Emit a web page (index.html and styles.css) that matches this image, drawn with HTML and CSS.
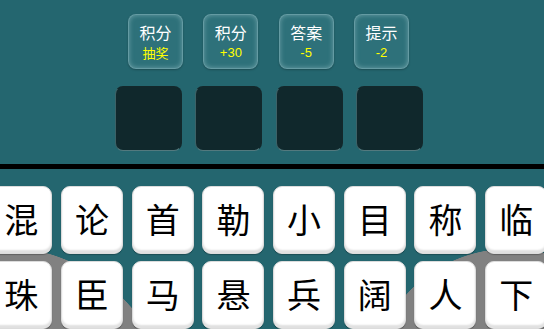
FILE: index.html
```html
<!DOCTYPE html>
<html lang="zh">
<head>
<meta charset="utf-8">
<link rel="stylesheet" href="styles.css">
</head>
<body>
<div class="page">
  <section class="top">
    <div class="tools">
      <div class="tool"><span class="tool-name">积分</span><span class="tool-val">抽奖</span></div>
      <div class="tool"><span class="tool-name">积分</span><span class="tool-val num">+30</span></div>
      <div class="tool"><span class="tool-name">答案</span><span class="tool-val num">-5</span></div>
      <div class="tool"><span class="tool-name">提示</span><span class="tool-val num">-2</span></div>
    </div>
    <div class="answers">
      <div class="slot"></div>
      <div class="slot"></div>
      <div class="slot"></div>
      <div class="slot"></div>
    </div>
  </section>
  <div class="divider"></div>
  <section class="board">
    <div class="keys">
      <div class="key">混</div>
      <div class="key">论</div>
      <div class="key">首</div>
      <div class="key">勒</div>
      <div class="key">小</div>
      <div class="key">目</div>
      <div class="key">称</div>
      <div class="key">临</div>
      <div class="key">珠</div>
      <div class="key">臣</div>
      <div class="key">马</div>
      <div class="key">悬</div>
      <div class="key">兵</div>
      <div class="key">阔</div>
      <div class="key">人</div>
      <div class="key">下</div>
    </div>
  </section>
</div>
</body>
</html>
```
FILE: styles.css
```css
html, body {
  margin: 0;
  padding: 0;
}
body {
  width: 544px;
  height: 329px;
  overflow: hidden;
  background: #24666f;
  font-family: "Noto Sans CJK SC", "Noto Sans", sans-serif;
}
.page {
  width: 544px;
  height: 329px;
  display: flex;
  flex-direction: column;
}
.top {
  height: 165px;
  display: flex;
  flex-direction: column;
  align-items: center;
}
.tools {
  display: flex;
  gap: 20.3px;
  padding-top: 14px;
  margin-right: 7px;
}
.tool {
  width: 55px;
  height: 55px;
  box-sizing: border-box;
  border-radius: 8px;
  background: #2e717a;
  border: 1px solid rgba(200, 235, 240, 0.35);
  box-shadow: inset 0 0 5px rgba(220, 245, 250, 0.35), 0 1px 2px rgba(0, 0, 0, 0.25);
  display: flex;
  flex-direction: column;
  align-items: center;
  padding-top: 7px;
}
.tool-name {
  color: #ffffff;
  font-size: 16px;
  line-height: 20px;
}
.tool-val {
  color: #ffff00;
  font-size: 13px;
  line-height: 16px;
  margin-top: 3px;
}
.tool-val.num {
  font-family: "Liberation Sans", Arial, sans-serif;
  font-size: 13px;
}
.answers {
  display: flex;
  gap: 13.3px;
  margin-top: 17px;
  margin-right: 6px;
}
.slot {
  width: 67px;
  height: 65px;
  box-sizing: border-box;
  border-radius: 8px;
  background: #10282c;
  border: 1px solid rgba(20, 40, 44, 0.9);
  border-bottom-color: rgba(140, 190, 195, 0.55);
  border-left-color: rgba(120, 170, 175, 0.45);
}
.divider {
  height: 5px;
  background: #000000;
}
.board {
  flex: 1;
  background:
    radial-gradient(circle at 0px 250px, #818181 172px, rgba(129, 129, 129, 0) 172.6px),
    radial-gradient(circle at 510px 220px, #818181 140px, rgba(129, 129, 129, 0) 140.6px),
    #24666f;
  padding-top: 17px;
}
.keys {
  display: grid;
  grid-template-columns: repeat(8, 62px);
  grid-auto-rows: 68px;
  column-gap: 8.7px;
  row-gap: 7px;
  margin-left: -9.7px;
}
.key {
  box-sizing: border-box;
  background: #ffffff;
  border-radius: 9px;
  border: 1px solid #dcdcdc;
  box-shadow: inset 0 -3px 2px #e0e0e0, 0 1px 1px rgba(0, 0, 0, 0.25);
  display: flex;
  align-items: center;
  justify-content: center;
  color: #000000;
  font-size: 34px;
  line-height: 1;
  padding-bottom: 2px;
}
```
